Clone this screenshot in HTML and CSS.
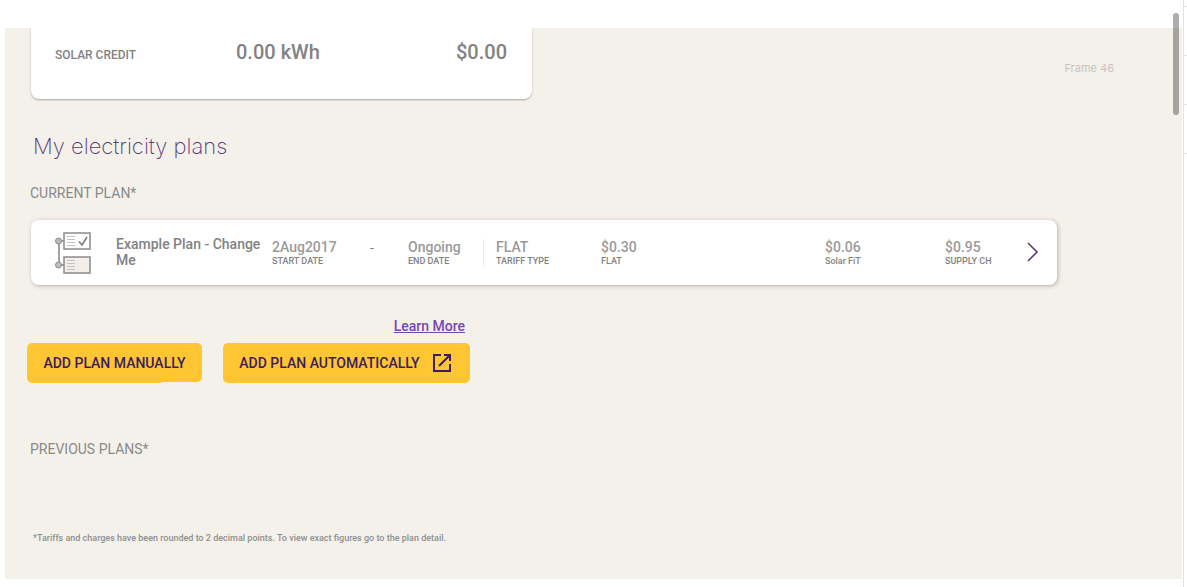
FILE: index.html
```html
<!DOCTYPE html>
<html lang="en">
<head>
<meta charset="utf-8">
<meta name="viewport" content="width=device-width, initial-scale=1">
<title>My electricity plans</title>
<link rel="stylesheet" href="styles.css">
</head>
<body>
<div class="page">
  <main class="panel">
    <div class="top">
      <section class="credit">
        <span class="credit-label">SOLAR CREDIT</span>
        <span class="credit-value">0.00 kWh</span>
        <span class="credit-value credit-amount">$0.00</span>
      </section>
      <span class="frame-label">Frame 46</span>
    </div>
    <h1 class="title">My electricity plans</h1>
    <h2 class="subtitle">CURRENT PLAN*</h2>
    <article class="plan">
      <svg class="plan-icon" width="38" height="42" viewBox="0 0 38 42" fill="none" aria-hidden="true">
        <path d="M5 9v24M5 9h5M5 33h5" stroke="#a2a2a2" stroke-width="2"/>
        <circle cx="4.500" cy="9" r="3" fill="#bcbcbc" stroke="#8c8c8c"/>
        <circle cx="4.500" cy="33" r="3" fill="#bcbcbc" stroke="#8c8c8c"/>
        <path d="M10 1h26v16H10z" fill="#fff" stroke="#8a8a8a" stroke-width="1.500"/>
        <path d="M10 25h26v16H10z" fill="#f3efe8" stroke="#8a8a8a" stroke-width="1.500"/>
        <path d="M13 4.500h8M13 7.500h8M13 10.500h8M13 13.500h8M13 28.500h8M13 31.500h8M13 34.500h8M13 37.500h8" stroke="#c2c2c2"/>
        <path d="M25 9.500l3 3.500 5-8" stroke="#777" stroke-width="1.500"/>
      </svg>
      <h3 class="plan-name">Example Plan - Change Me</h3>
      <div class="fact"><span class="fact-value">2Aug2017</span><span class="fact-label">START DATE</span></div>
      <span class="dash">-</span>
      <div class="fact"><span class="fact-value">Ongoing</span><span class="fact-label">END DATE</span></div>
      <div class="fact divided"><span class="fact-value">FLAT</span><span class="fact-label">TARIFF TYPE</span></div>
      <div class="fact"><span class="fact-value">$0.30</span><span class="fact-label">FLAT</span></div>
      <div class="fact"><span class="fact-value">$0.06</span><span class="fact-label">Solar FiT</span></div>
      <div class="fact"><span class="fact-value">$0.95</span><span class="fact-label">SUPPLY CH</span></div>
      <button class="open" type="button" aria-label="Open plan">
        <svg width="12" height="20" viewBox="0 0 12 20" fill="none"><path d="M1 1l9 9-9 9" stroke="#583a78" stroke-width="1.600"/></svg>
      </button>
    </article>
    <div class="actions">
      <a class="learn" href="#learn">Learn More</a>
      <button class="btn btn-manual" type="button">ADD PLAN MANUALLY</button>
      <button class="btn btn-auto" type="button">ADD PLAN AUTOMATICALLY
        <svg width="18" height="18" viewBox="0 0 18 18" fill="none" stroke="#3b1d60" stroke-width="2"><path d="M8 1H1v16h16v-7M11 1h6v6M17 1L6 12"/></svg>
      </button>
    </div>
    <h2 class="subtitle">PREVIOUS PLANS*</h2>
    <p class="note">*Tariffs and charges have been rounded to 2 decimal points. To view exact figures go to the plan detail.</p>
  </main>
  <aside class="ruler"></aside>
  <div class="thumb"></div>
</div>
</body>
</html>
```
FILE: styles.css
```css
* { box-sizing: border-box; }
body { margin: 0; background: #fff; color: #828282; font-family: Roboto, "Liberation Sans", sans-serif; }
h1, h2, h3, p { margin: 0; }
button { border: 0; font: inherit; cursor: pointer; }
svg { display: block; }

.page { position: relative; display: flex; min-height: 100vh; padding-left: 5px; }
.panel { flex: 1; min-width: 0; margin: 28px 1px 8px 0; padding: 0 68px 32px 22px; background: #f4f1ea; }
.ruler {
  width: 4px;
  border-left: 1px solid #e3e3e3;
  background: linear-gradient(#e3e3e3 1px, transparent 1px) 0 6px / 100% 49px;
}
.ruler::after { content: ""; display: block; height: calc(100% - 160px); margin-top: 160px; background: #fff; }
.thumb { position: absolute; top: 13px; right: 8px; width: 6px; height: 102px; border-radius: 3px; background: rgba(0, 0, 0, 0.32); }

.top { display: flex; justify-content: space-between; align-items: flex-start; gap: 24px; }
.credit {
  flex: 0 1 501px;
  display: grid;
  grid-template-columns: 181px 1fr auto;
  align-items: center;
  margin-left: 4px;
  padding: 12px 25px 35px 24px;
  background: #fff;
  border-radius: 0 0 8px 8px;
  box-shadow: 0 1px 2px #a5a9a0;
  clip-path: inset(0 -4px -4px -4px);
}
.credit-label { padding-top: 6px; font-size: 12px; line-height: 18px; font-weight: 500; }
.credit-value { font-size: 20px; line-height: 24px; font-weight: 500; }
.frame-label { padding-top: 33px; font-family: Inter, sans-serif; font-size: 11px; line-height: 14px; color: #c6c4bf; }

.title { margin: 33px 0 0 6px; font-family: Inter, sans-serif; font-size: 22px; line-height: 28px; font-weight: 200; color: #583a78; }
.subtitle { margin-left: 3px; font-size: 14px; line-height: 18px; font-weight: 400; color: #8a8a8a; }
.title + .subtitle { margin-top: 24px; }

.plan {
  display: grid;
  grid-template-columns: 62px 156px 98px 38px 75px 118px 1fr 120px 82px 12px;
  align-items: center;
  min-height: 65px;
  margin: 18px 57px 0 4px;
  padding: 0 18px 0 23px;
  background: #fff;
  border-radius: 8px;
  box-shadow: 1px 1px 4px rgba(90, 85, 75, 0.4);
}
.plan-name { padding: 0 4px 2px 0; font-size: 14px; line-height: 16px; font-weight: 500; }
.fact { display: flex; flex-direction: column; font-weight: 500; }
.fact-value { font-size: 14px; line-height: 16px; color: #9a9a9a; }
.fact-label { font-size: 9px; line-height: 12px; }
.dash { font-size: 14px; line-height: 16px; padding-bottom: 10px; }
.divided { padding-left: 12px; border-left: 1px solid #eeece6; }
.open { padding: 0 0 2px; background: none; }

.actions {
  display: grid;
  grid-template-columns: 175px 247px;
  column-gap: 21px;
  align-items: start;
  margin: 32px 0 57px;
}
.learn { grid-column: 2; justify-self: end; margin: 0 5px 8px 0; font-size: 14px; line-height: 18px; font-weight: 500; color: #7746b5; }
.btn { height: 40px; border-radius: 5px; background: #ffc533; color: #3b1d60; font-size: 14px; font-weight: 500; white-space: nowrap; }
.btn-manual { position: relative; height: 39px; }
.btn-manual::after { content: ""; position: absolute; bottom: -1px; left: 0; width: 138px; height: 10px; border-radius: 0 0 5px 5px; background: #ffc533; }
.btn-auto { display: flex; align-items: center; justify-content: center; gap: 13px; padding: 0 9px 0 6px; }
.note { margin: 73px 0 0 6px; font-size: 9px; line-height: 14px; font-weight: 500; color: #8f8f8f; }
```
